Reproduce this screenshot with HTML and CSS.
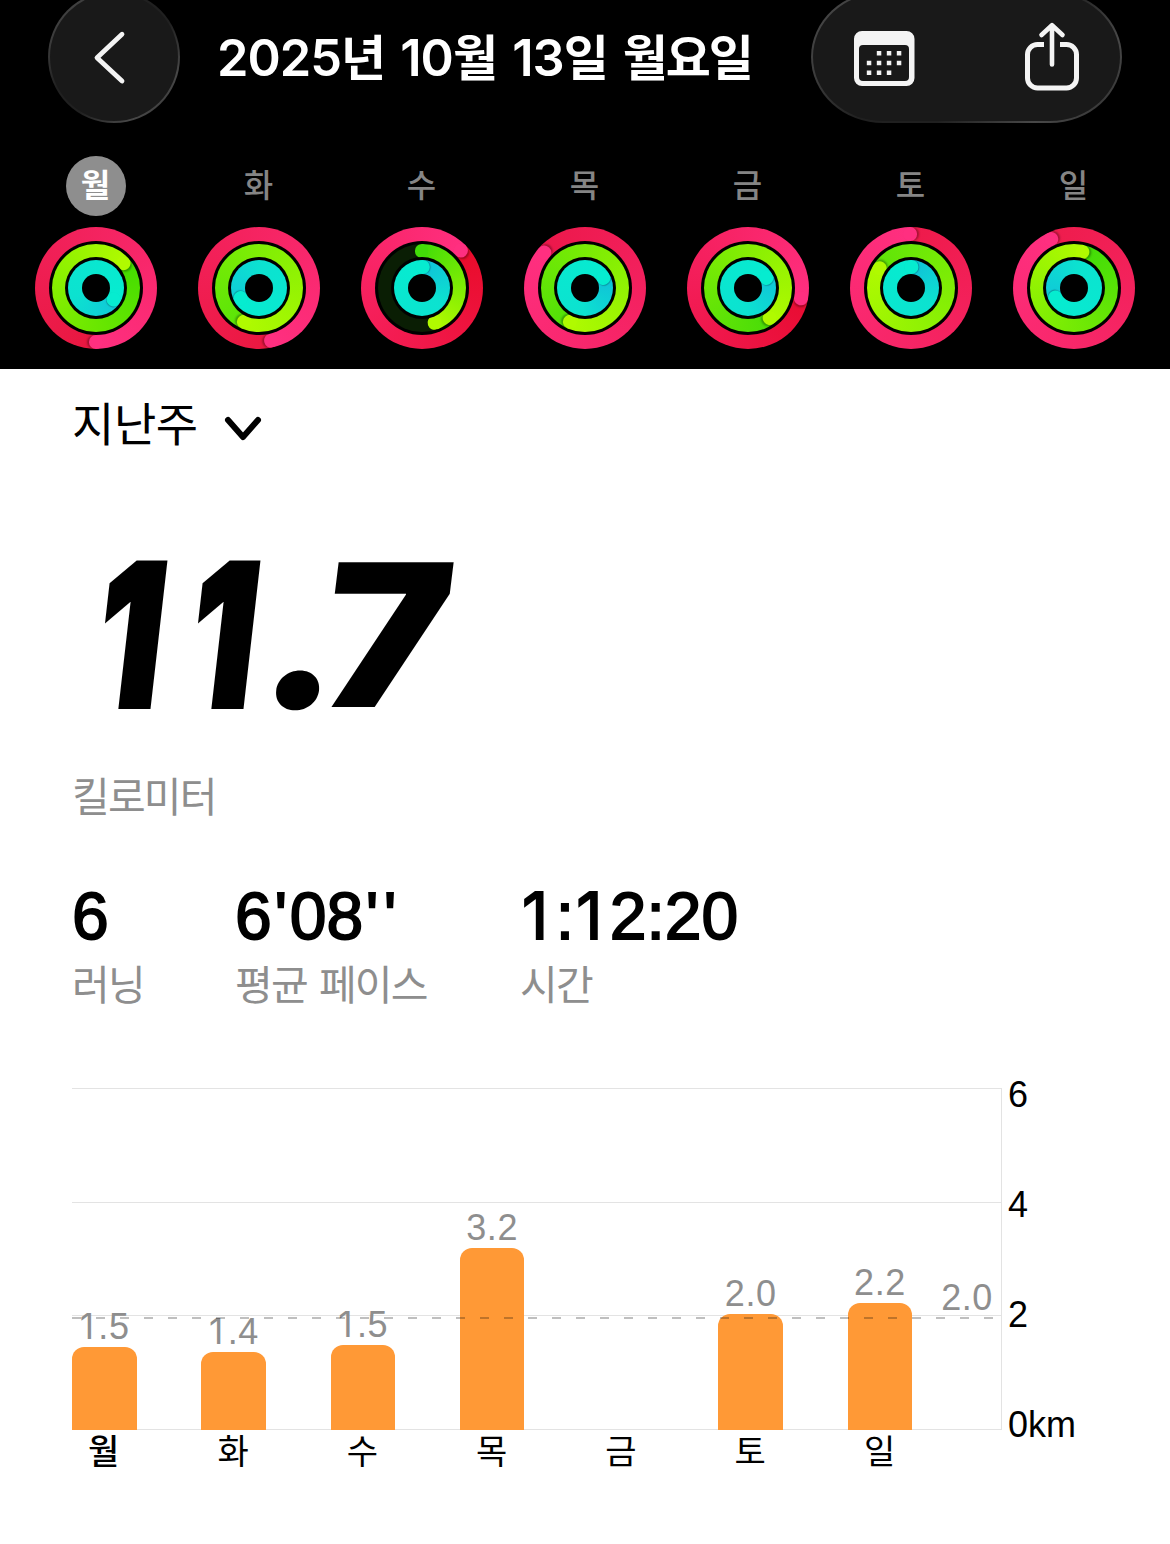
FILE: index.html
```html
<!DOCTYPE html>
<html lang="ko">
<head>
<meta charset="UTF-8">
<title>주간 러닝 기록</title>
<meta name="viewport" content="width=device-width, initial-scale=1.0">
<link rel="stylesheet" href="styles.css">
</head>
<body>
<header class="top">
    <div class="nav">
        <button class="glass back" aria-label="뒤로">
            <svg width="132" height="132" viewBox="0 0 132 132" fill="none" stroke="#f4f4f4" stroke-width="4.8" stroke-linecap="round" stroke-linejoin="round"><path d="M74 43.200 49 66.700l25 23.300"/></svg>
        </button>
        <h1 class="title"><span class="num">2025</span>년 <span class="num">10</span>월 <span class="num">13</span>일 월요일</h1>
        <div class="glass actions">
            <svg width="311" height="132" viewBox="0 0 311 132" fill="none">
                <path fill="#f4f4f4" fill-rule="evenodd" d="M51 40h44.500a8 8 0 0 1 8 8v39a8 8 0 0 1-8 8H51a8 8 0 0 1-8-8V48a8 8 0 0 1 8-8zm1 14a4 4 0 0 0-4 4v28a4 4 0 0 0 4 4h42a4 4 0 0 0 4-4V58a4 4 0 0 0-4-4z"/>
                <path stroke="#f4f4f4" stroke-width="4.500" stroke-dasharray="4.500 5.500" d="M65.800 62.300h25M55.800 72h35M55.800 81.700h25"/>
                <g stroke="#f4f4f4" stroke-width="5">
                    <path d="M233 53.500h-6.500a10 10 0 0 0-10 10V87a10 10 0 0 0 10 10h29a10 10 0 0 0 10-10V63.500a10 10 0 0 0-10-10H249"/>
                    <path stroke-width="4.600" stroke-linecap="round" stroke-linejoin="round" d="M241 73.500V34.500M230.500 44 241 34.200 251.500 44"/>
                </g>
            </svg>
        </div>
    </div>
    <div class="week" id="week"></div>
</header>

<main>
    <div class="period">
        <span>지난주</span>
        <svg width="40" height="28" viewBox="0 0 40 28" fill="none" stroke="#000" stroke-width="6" stroke-linecap="round" stroke-linejoin="round"><path d="M5 5 20 22 35 5"/></svg>
    </div>
    <div class="distance"><span class="d1">1</span><span class="d1">1</span><span class="dot">.</span><span class="d7">7</span></div>
    <div class="unit">킬로미터</div>

    <div class="stats">
        <div><div class="value">6</div><div class="label">러닝</div></div>
        <div><div class="value">6<em>'</em>08<em>'</em><em>'</em></div><div class="label">평균 페이스</div></div>
        <div><div class="value"><i>1</i>:<i>1</i>2:20</div><div class="label">시간</div></div>
    </div>

    <div class="chart">
        <div class="plot">
            <div class="bars" id="bars"></div>
            <div class="avg"><span>2.0</span></div>
        </div>
        <div class="scale"><span>6</span><span>4</span><span>2</span><span>0km</span></div>
        <div class="days" id="days"></div>
    </div>
</main>

<script src="script.js"></script>
</body>
</html>
```
FILE: styles.css
```css
*{box-sizing:border-box}
body{margin:0;background:#fff;color:#000;font-family:"Liberation Sans","Noto Sans CJK KR",sans-serif}

/* 상단 */
.top{height:369px;background:#000;overflow:hidden}
.nav{display:flex;height:123px;padding:0 48px;align-items:flex-end}
.glass{flex:none;height:132px;padding:0;border:2px solid transparent;border-radius:66px;background:linear-gradient(#191919,#191919) padding-box,linear-gradient(135deg,#4a4a4a,#3c3c3c 20%,#202020 40%,#202020 58%,#484848 80%,#303030) border-box}
.glass svg{display:block;margin:-2px}
.back{width:132px}
.actions{width:311px;margin-left:auto;border-radius:72px/66px}
.title{margin:0 0 0 37px;height:132px;line-height:133px;font-family:Inter,"Noto Sans CJK KR",sans-serif;font-size:49px;font-weight:600;color:#fff;white-space:nowrap;letter-spacing:-2.100px;word-spacing:6px}
.title .num{font-size:50.500px;letter-spacing:-1px}

.week{display:grid;grid-template-columns:repeat(7,163px);margin:33px 0 0 14px}
.day{display:flex;flex-direction:column;align-items:center;gap:11px}
.day b{width:60px;height:60px;border-radius:50%;text-align:center;font:500 32px/54px "Noto Sans CJK KR",sans-serif;color:#858585}
.day .on{background:#8e8e8e;color:#fff;font-weight:700}

/* 활동 링 */
.ring{position:relative;display:grid;place-items:center;overflow:hidden;border-radius:50%}
.hole{position:relative;display:grid;place-items:center;border-radius:50%;background:#000}
.move{width:122px;height:122px}
.move>.hole{width:94px;height:94px}
.exercise{width:88px;height:88px}
.exercise>.hole{width:62px;height:62px}
.stand{width:56px;height:56px}
.stand>.hole{width:28px;height:28px}
.cap{position:absolute;inset:0}
.cap::after{content:"";position:absolute;left:50%;top:0;width:13.500px;height:13.500px;margin-left:-6.750px;border-radius:50%;background:var(--c);box-shadow:2px 0 2px rgba(0,0,0,.3)}
.stand .cap::after{box-shadow:1px 0 1px rgba(0,0,0,.25)}
.cap.first::after{box-shadow:none}

/* 본문 */
main{padding:0 72px}
.period{display:flex;align-items:center;height:110px;gap:27px;font-size:46px;letter-spacing:-.4px}
.period span{margin:-6px 0 0}
.period svg{margin-top:10px;margin-left:-2px}
.distance{display:flex;height:278px;padding-left:15px;line-height:312px;font-family:Inter,sans-serif;font-weight:900;font-size:199px}
.distance span{flex:none;display:block;text-align:center;transform:skewX(-7deg)}
.distance .d1{width:93px;font-size:196px;transform:skewX(-6.500deg) scaleX(.72);-webkit-text-stroke:6px #000}
.distance .dot{width:60px;margin-left:-4px;transform:skewX(-7deg) scale(1.07,1.01)}
.distance .d7{width:86px;transform:skewX(-7deg) scaleX(1.07)}
.unit,.label{color:#8e8e8e;font-size:41px;letter-spacing:-1.800px;word-spacing:2.500px}
.unit{line-height:82px;height:80px}
.stats{display:grid;grid-template-columns:163px 285px 1fr;margin-top:39px}
.value{font-size:66px;line-height:80px;height:80px;-webkit-text-stroke:1.800px #000;white-space:nowrap}
.label{line-height:61px;height:58px}
i{display:inline-block;width:.552em;padding-right:.08em;font-family:Inter,sans-serif;font-style:normal;font-size:.98em;line-height:1;text-align:center}
em{display:inline-block;width:18px;font-style:normal;line-height:1;text-align:center}

/* 차트 */
.chart{display:grid;grid-template-columns:930px 1fr;margin-top:74px}
.plot{position:relative;height:342px;border:solid #e3e3e3;border-width:1px 1px 1px 0;background:linear-gradient(#e3e3e3,#e3e3e3) 0 113px/100% 1px no-repeat,linear-gradient(#e3e3e3,#e3e3e3) 0 226px/100% 1px no-repeat}
.bars{display:grid;grid-template-columns:repeat(7,129.300px);height:341px}
.col{display:flex;flex-direction:column;justify-content:flex-end;width:64.500px}
.num-label{height:36px;text-align:center;color:#8e8e8e;font-size:36px;line-height:36px;letter-spacing:.6px;white-space:nowrap}
.bar{margin-top:2px;border-radius:12px 12px 0 0;background:#ff9936}
.avg{position:absolute;left:0;right:0;top:228px;height:2px;background:repeating-linear-gradient(90deg,rgba(0,0,0,.25) 0 9px,transparent 9px 24px)}
.avg span{position:absolute;right:8px;bottom:3px;color:#8e8e8e;font-size:36px;line-height:36px;letter-spacing:.6px}
.scale{display:flex;flex-direction:column;height:342px;margin-top:-48px;padding-left:6px;font-size:36px;line-height:110px}
.days{display:grid;grid-template-columns:repeat(7,129.300px);margin:-1px 0 0 -.5px}
.days span{width:64.500px;text-align:center;font-size:34px;line-height:46px}
.days span:first-child{font-weight:500}
```
FILE: script.js
```javascript
// 링 데이터: [각도, 시작색] 순서로 움직이기 / 운동하기 / 일어서기
const week = [
    {d:'월', move:[180,'#e8173f'], exercise:[48,'#42dc00'],  stand:[123,'#10c8d8'], bar:83},
    {d:'화', move:[167,'#ea173f'], exercise:[204,'#5ae408'], stand:[241,'#10ccd8'], bar:78},
    {d:'수', move:[46,'#e90b2a'],  exercise:[160,'#42dc08'], stand:[2,'#10c0d8'],   bar:85},
    {d:'목', move:[311,'#ec184a'], exercise:[204,'#50e008'], stand:[61,'#10c0d8'],  bar:182},
    {d:'금', move:[101,'#e80c32'], exercise:[144,'#48dc08'], stand:[61,'#10c4d8'],  bar:0},
    {d:'토', move:[359,'#ee1a4a'], exercise:[302,'#5ee408'], stand:[1,'#10c0d8'],   bar:116},
    {d:'일', move:[335,'#ee1c4c'], exercise:[13,'#40dc08'],  stand:[243,'#10c8d8'], bar:127}
];
const labels = ['1.5','1.4','1.5','3.2','','2.0','2.2'];
const ends = {move:'#ff2f80', exercise:'#b0fa00', stand:'#06ecd0'};

function ring(day, name, inner){
    const [deg, start] = day[name];
    let bg = `conic-gradient(from ${deg}deg,${start},${ends[name]})`;
    let first = '';
    if(name==='stand') bg = `conic-gradient(from ${deg}deg,${start},#0ce2d0 35%,${ends[name]})`;
    // 수요일 운동하기는 아직 한 바퀴를 채우지 못함
    if(day.d==='수' && name==='exercise'){
        bg = `conic-gradient(${start},${ends[name]} ${deg}deg,#0a1e04 ${deg}deg)`;
        first = `<div class="cap first" style="--c:${start}"></div>`;
    }
    return `<div class="ring ${name}" style="background:${bg}">${first}
        <div class="cap${first?' first':''}" style="--c:${ends[name]};transform:rotate(${deg}deg)"></div>
        <div class="hole">${inner}</div></div>`;
}

document.getElementById('week').innerHTML = week.map((w,i)=>
    `<div class="day"><b class="${i===0?'on':''}">${w.d}</b>${ring(w,'move',ring(w,'exercise',ring(w,'stand','')))}</div>`
).join('');

document.getElementById('bars').innerHTML = week.map((w,i)=>
    `<div class="col"><div class="num-label">${labels[i].replace('1','<i>1</i>')}</div><div class="bar" style="height:${w.bar}px"></div></div>`
).join('');

document.getElementById('days').innerHTML = week.map(w=>`<span>${w.d}</span>`).join('');
```
